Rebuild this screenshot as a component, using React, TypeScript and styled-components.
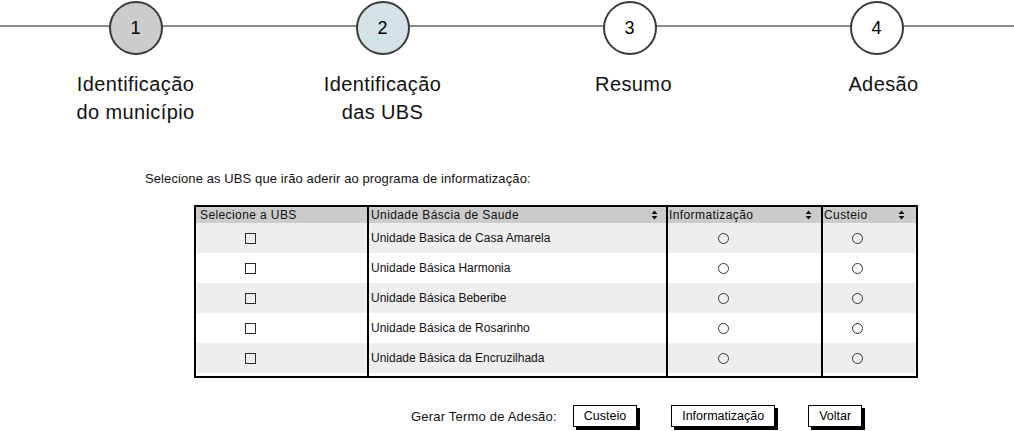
import styled, { createGlobalStyle } from 'styled-components'

const GlobalStyle = createGlobalStyle`
  html, body {
    margin: 0;
    padding: 0;
    background: #fff;
  }
  body {
    font-family: "Liberation Sans", Arial, sans-serif;
    color: #111;
  }
`

const Page = styled.div`
  width: 1014px;
  height: 431px;
  overflow: hidden;
  display: flex;
  flex-direction: column;
`

const Stepper = styled.div`
  position: relative;
  display: grid;
  grid-template-columns: repeat(4, 247px);
  padding: 1px 0 0 12px;

  &::before {
    content: "";
    position: absolute;
    left: 0;
    right: 0;
    top: 25px;
    height: 1.5px;
    background: #8a8a8a;
  }
`

const Step = styled.div`
  display: flex;
  flex-direction: column;
  align-items: center;
`

const Circle = styled.div<{ $fill: string }>`
  position: relative;
  z-index: 1;
  width: 54px;
  height: 54px;
  box-sizing: border-box;
  border-radius: 50%;
  border: 2px solid #3a3a3a;
  background: ${p => p.$fill};
  display: flex;
  align-items: center;
  justify-content: center;
  font-size: 18px;
  color: #000;
`

const StepLabel = styled.div<{ $shift: number }>`
  margin-top: 15px;
  padding-left: ${p => p.$shift}px;
  font-size: 20px;
  letter-spacing: 0.4px;
  line-height: 28px;
  text-align: center;
  color: #111;
`

const Instruction = styled.p`
  margin: 45px 0 0 145px;
  font-size: 13px;
  letter-spacing: 0.1px;
  line-height: 16px;
`

const TableFrame = styled.div`
  margin: 18px 0 0 194px;
  width: 724px;
  box-sizing: border-box;
  border: 2px solid #000;
  font-size: 12px;
`

const Row = styled.div<{ $bg: string; $height: number; $spacing?: number }>`
  display: grid;
  grid-template-columns: 173px 299px 155px 93px;
  height: ${p => p.$height}px;
  background: ${p => p.$bg};
  letter-spacing: ${p => p.$spacing ?? 0}px;
`

const Cell = styled.div<{ $divider?: boolean; $pl: number; $pr?: number }>`
  display: flex;
  align-items: center;
  justify-content: space-between;
  box-sizing: border-box;
  padding-left: ${p => p.$pl}px;
  padding-right: ${p => p.$pr ?? 0}px;
  border-right: ${p => (p.$divider ? '2px solid #000' : 'none')};
  white-space: nowrap;
  overflow: hidden;
`

const Checkbox = styled.span`
  width: 11px;
  height: 11px;
  box-sizing: border-box;
  border: 1.5px solid #2a2a2a;
`

const Radio = styled.span`
  width: 11px;
  height: 11px;
  box-sizing: border-box;
  border-radius: 50%;
  border: 1px solid #333;
`

const ButtonBar = styled.div`
  display: flex;
  align-items: center;
  margin: 27px 0 0 411px;
`

const BarLabel = styled.span`
  font-size: 13px;
  letter-spacing: 0.2px;
  margin-right: 16px;
`

const Button = styled.button<{ $ml: number }>`
  margin-left: ${p => p.$ml}px;
  height: 22px;
  padding: 0 10px;
  font-family: inherit;
  font-size: 12.5px;
  color: #000;
  background: #fff;
  border: 1.5px solid #000;
  border-radius: 0;
  box-shadow: 3px 3px 0 #000;
`

const SortIcon = () => (
  <svg width="7" height="10" viewBox="0 0 7 10">
    <path d="M3.5 0.5 L6.5 4 H0.5 Z M3.5 9.5 L6.5 6 H0.5 Z" fill="#111" />
  </svg>
)

const steps = [
  { n: 1, label: ['Identificação', 'do município'], fill: '#cccccc', shift: 0 },
  { n: 2, label: ['Identificação', 'das UBS'], fill: '#d3e3e5', shift: 0 },
  { n: 3, label: ['Resumo'], fill: '#ffffff', shift: 8 },
  { n: 4, label: ['Adesão'], fill: '#ffffff', shift: 14 },
]

const units = [
  'Unidade Basica de Casa Amarela',
  'Unidade Básica Harmonia',
  'Unidade Básica Beberibe',
  'Unidade Básica de Rosarinho',
  'Unidade Básica da Encruzilhada',
]

export default function App() {
  return (
    <Page>
      <GlobalStyle />
      <Stepper>
        {steps.map(s => (
          <Step key={s.n}>
            <Circle $fill={s.fill}>{s.n}</Circle>
            <StepLabel $shift={s.shift}>
              {s.label.map(l => (
                <div key={l}>{l}</div>
              ))}
            </StepLabel>
          </Step>
        ))}
      </Stepper>

      <Instruction>Selecione as UBS que irão aderir ao programa de informatização:</Instruction>

      <TableFrame>
        <Row $bg="#cbcbcb" $height={16} $spacing={0.4}>
          <Cell $divider $pl={4}>Selecione a UBS</Cell>
          <Cell $divider $pl={2} $pr={8}>
            Unidade Báscia de Saude
            <SortIcon />
          </Cell>
          <Cell $divider $pl={1} $pr={9}>
            Informatização
            <SortIcon />
          </Cell>
          <Cell $pl={1} $pr={11}>
            Custeio
            <SortIcon />
          </Cell>
        </Row>
        {units.map((u, i) => (
          <Row key={u} $bg={i % 2 === 0 ? '#eeeeee' : '#ffffff'} $height={30}>
            <Cell $divider $pl={49}>
              <Checkbox />
            </Cell>
            <Cell $divider $pl={2}>{u}</Cell>
            <Cell $divider $pl={50}>
              <Radio />
            </Cell>
            <Cell $pl={29}>
              <Radio />
            </Cell>
          </Row>
        ))}
        <Row $bg="#ffffff" $height={3}>
          <Cell $divider $pl={0} />
          <Cell $divider $pl={0} />
          <Cell $divider $pl={0} />
          <Cell $pl={0} />
        </Row>
      </TableFrame>

      <ButtonBar>
        <BarLabel>Gerar Termo de Adesão:</BarLabel>
        <Button $ml={0}>Custeio</Button>
        <Button $ml={34}>Informatização</Button>
        <Button $ml={33}>Voltar</Button>
      </ButtonBar>
    </Page>
  )
}
